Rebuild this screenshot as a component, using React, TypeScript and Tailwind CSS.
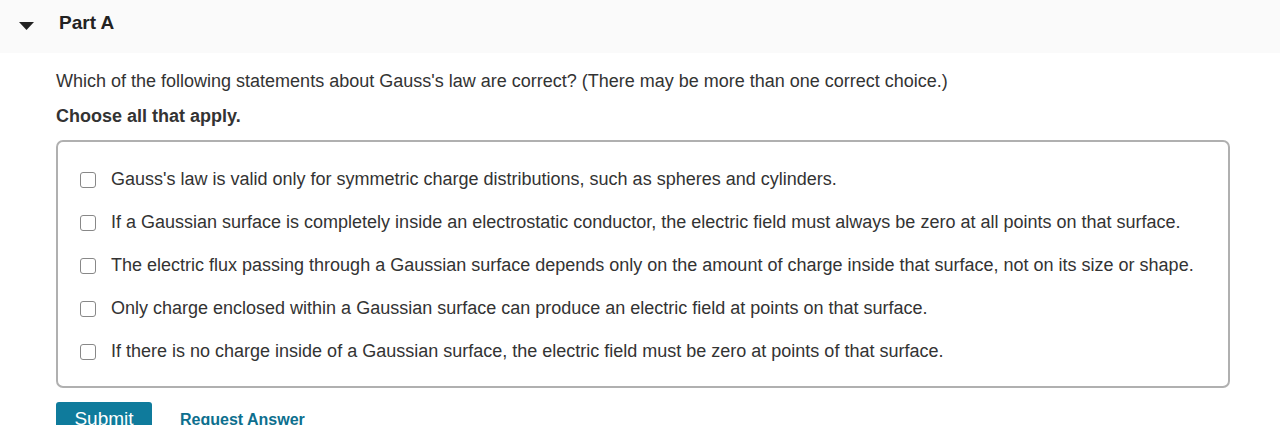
const options = [
  "Gauss's law is valid only for symmetric charge distributions, such as spheres and cylinders.",
  "If a Gaussian surface is completely inside an electrostatic conductor, the electric field must always be zero at all points on that surface.",
  "The electric flux passing through a Gaussian surface depends only on the amount of charge inside that surface, not on its size or shape.",
  "Only charge enclosed within a Gaussian surface can produce an electric field at points on that surface.",
  "If there is no charge inside of a Gaussian surface, the electric field must be zero at points of that surface.",
];

export default function App() {
  return (
    <div className="w-[1280px] h-[425px] overflow-hidden bg-white text-[#333] font-['Liberation_Sans',Arial,sans-serif]">
      <div className="h-[53px] bg-[#fafafa] flex items-center pl-[19px]">
        <svg width="15" height="9" viewBox="0 0 15 9" className="mt-[-1px]">
          <path d="M0 0 L15 0 L7.5 8 Z" fill="#222" />
        </svg>
        <span className="ml-[25px] text-[19px] font-bold text-[#222] mt-[-7px]">Part A</span>
      </div>
      <div className="px-[56px] pr-[50px]">
        <p className="mt-[16px] text-[18px] leading-[24px]">
          Which of the following statements about Gauss's law are correct? (There may be more than one correct choice.)
        </p>
        <p className="mt-[11px] text-[18px] leading-[24px] font-bold">Choose all that apply.</p>
        <div className="mt-[12px] border-2 border-[#b0b0b0] rounded-[7px] pt-[16px] pb-[13px] pl-[22px]">
          {options.map((o) => (
            <label key={o} className="flex items-center h-[43px]">
              <span className="w-[16px] h-[16px] border border-[#888] rounded-[3px] bg-white" />
              <span className="ml-[15px] text-[18px]">{o}</span>
            </label>
          ))}
        </div>
        <div className="mt-[14px] flex items-start">
          <div className="w-[96px] h-[40px] bg-[#0f7b9c] text-white text-[19px] leading-[24px] text-center rounded-t-[3px] pt-[5px]">Submit</div>
          <span className="ml-[28px] mt-[6px] text-[16px] font-bold text-[#0d6f8e]">Request Answer</span>
        </div>
      </div>
    </div>
  );
}
